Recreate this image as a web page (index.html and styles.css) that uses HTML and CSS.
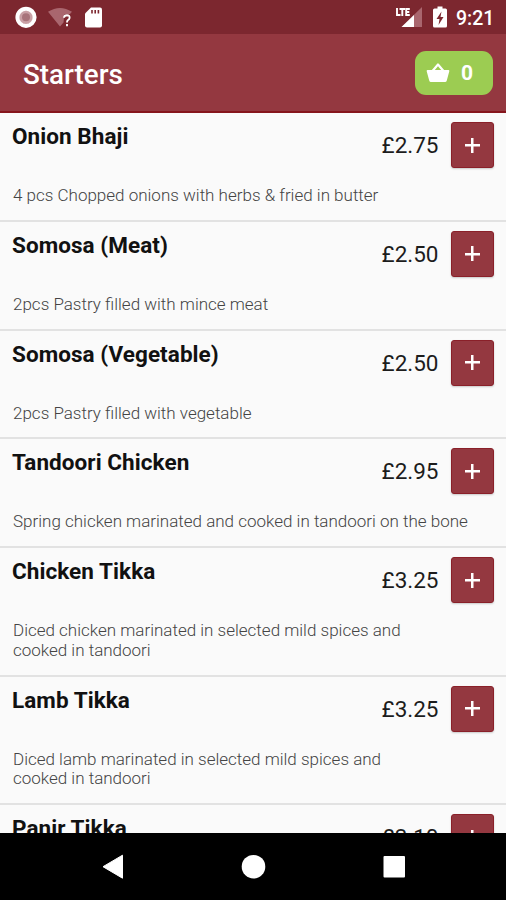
FILE: index.html
```html
<!DOCTYPE html>
<html lang="en">
<head>
<meta charset="utf-8">
<title>Starters</title>
<link rel="stylesheet" href="styles.css">
</head>
<body>
<div class="status">
  <svg class="status-left" width="110" height="34" viewBox="0 0 110 34">
    <circle cx="26" cy="17.3" r="7" fill="#c9a0a5"/>
    <circle cx="26" cy="17.3" r="4" fill="#a8747b"/>
    <circle cx="26" cy="17.3" r="8.600" fill="none" stroke="#fff" stroke-width="4"/>
    <path d="M48 11.8Q60 4.2 72 11.8L70 14H64.5L63.5 22.5L60 26.5Z" fill="#a9666e"/>
    <path d="M64 17.8Q64.2 15.2 67 15.2Q69.8 15.400 69.6 17.800Q69.4 19.200 67.8 20.200Q67 20.900 67 22.500M67 24V26.200" fill="none" stroke="#fff" stroke-width="1.9"/>
    <path d="M91 7.5H100Q102 7.5 102 9.5V25.5Q102 27.5 100 27.5H87Q85 27.5 85 25.5V13.5Z" fill="#fff"/>
    <path d="M92 10V13.5M95.2 10V13.5M98.4 10V13.5" stroke="#7c272f" stroke-width="1.6"/>
  </svg>
  <div class="status-right">
    <svg width="54" height="34" viewBox="0 0 54 34">
      <path d="M27 7V27H6.500Z" fill="#a9666e"/>
      <path d="M0 6H15.500V17H0Z" fill="#7c272f"/>
      <path d="M19 15V27H6.500Z" fill="#fff"/>
      <path d="M2 8V15H5.500M4.500 9H10M7.300 9V16M14.800 9H11.200V15H14.800M11.200 12H14.300" fill="none" stroke="#fff" stroke-width="1.900"/>
      <path d="M42.500 6.500H47.500V8.500H50.500Q52 8.500 52 10V26Q52 27.500 50.500 27.500H39.500Q38 27.500 38 26V10Q38 8.500 39.500 8.500H42.500Z" fill="#fff"/>
      <path d="M46.500 11.500L41.500 19H44.500L43.500 25L48.500 17H45.500Z" fill="#7c272f"/>
    </svg>
    <span class="clock">9:21</span>
  </div>
</div>
<header class="bar">
  <h1>Starters</h1>
  <div class="basket">
    <svg width="24" height="22" viewBox="0 0 24 22">
      <path d="M6.500 9L12 2.500L17.500 9" fill="none" stroke="#fff" stroke-width="2.200" stroke-linejoin="round"/>
      <path d="M1.500 8H22.500Q23.500 8 23.300 9.200L20.800 18.500Q20.400 20 19 20H5Q3.600 20 3.200 18.500L.7 9.200Q.5 8 1.500 8Z" fill="#fff"/>
    </svg>
    <span>0</span>
  </div>
</header>
<main class="list">
  <section class="item"><div class="top"><h2>Onion Bhaji</h2><span class="price">£2.75</span><button class="add"></button></div><p>4 pcs Chopped onions with herbs &amp; fried in butter</p></section>
  <section class="item"><div class="top"><h2>Somosa (Meat)</h2><span class="price">£2.50</span><button class="add"></button></div><p>2pcs Pastry filled with mince meat</p></section>
  <section class="item"><div class="top"><h2>Somosa (Vegetable)</h2><span class="price">£2.50</span><button class="add"></button></div><p>2pcs Pastry filled with vegetable</p></section>
  <section class="item"><div class="top"><h2>Tandoori Chicken</h2><span class="price">£2.95</span><button class="add"></button></div><p>Spring chicken marinated and cooked in tandoori on the bone</p></section>
  <section class="item tall"><div class="top"><h2>Chicken Tikka</h2><span class="price">£3.25</span><button class="add"></button></div><p>Diced chicken marinated in selected mild spices and<br>cooked in tandoori</p></section>
  <section class="item tall"><div class="top"><h2>Lamb Tikka</h2><span class="price">£3.25</span><button class="add"></button></div><p>Diced lamb marinated in selected mild spices and<br>cooked in tandoori</p></section>
  <section class="item"><div class="top"><h2>Panir Tikka</h2><span class="price">£3.10</span><button class="add"></button></div></section>
</main>
<nav class="nav">
  <svg width="506" height="66" viewBox="0 0 506 66">
    <path d="M103 33.700L122.500 22.200V45.200Z" fill="#fff" stroke="#fff" stroke-linejoin="round"/>
    <circle cx="253.500" cy="33.700" r="11.800" fill="#fff"/>
    <rect x="383.500" y="23" width="21.500" height="21.500" rx="1" fill="#fff"/>
  </svg>
</nav>
</body>
</html>
```

FILE: styles.css
```css
* { box-sizing: border-box; }
body {
  margin: 0;
  width: 506px;
  height: 900px;
  overflow: hidden;
  display: flex;
  flex-direction: column;
  background: #fafafa;
  font-family: Roboto, sans-serif;
}
h1, h2, p { margin: 0; }
svg { display: block; }
.status {
  flex: none;
  height: 34px;
  display: flex;
  justify-content: space-between;
  background: #7c272f;
}
.status-right { display: flex; padding-right: 10px; }
.clock {
  width: 40px;
  margin-left: 7px;
  font-size: 19.500px;
  font-weight: 500;
  line-height: 37px;
  color: #fff;
  white-space: nowrap;
}
.bar {
  flex: none;
  height: 79px;
  display: flex;
  align-items: center;
  justify-content: space-between;
  padding: 0 13px 0 23px;
  background: #943840;
  border-bottom: 2px solid #86161d;
  color: #fff;
}
.bar h1 { font-size: 27.800px; font-weight: 500; line-height: 32px; padding-top: 4px; }
.basket {
  width: 78px;
  height: 44px;
  margin-top: 1px;
  border-radius: 11px;
  background: #9ccc52;
  display: flex;
  align-items: center;
  padding-left: 11px;
  gap: 11px;
  font-size: 21px;
  font-weight: 700;
}
.list { flex: 1; min-height: 0; overflow: hidden; }
.item {
  height: 108.75px;
  padding: 9px 12px 0 12px;
  border-bottom: 2px solid #e2e2e2;
}
.item.tall { height: 128.500px; }
.top { display: flex; height: 60px; align-items: flex-start; }
.top h2 { flex: 1; font-size: 22.500px; font-weight: 700; line-height: 28px; letter-spacing: .06px; color: #111; }
.price { font-size: 22.500px; line-height: 46px; color: #1c1c1c; margin-right: 12.500px; }
.add {
  width: 43px;
  height: 46px;
  padding: 0;
  border: 1px solid #8a2029;
  border-radius: 3px;
  background:
    linear-gradient(#fff, #fff) center / 15px 2.500px no-repeat,
    linear-gradient(#fff, #fff) center / 2.500px 15px no-repeat,
    #943840;
  box-shadow: 0 1px 2px rgba(0, 0, 0, .2);
}
.item p {
  padding: 4px 0 0 1px;
  font-size: 17px;
  font-weight: 300;
  line-height: 19.500px;
  color: #444;
  white-space: nowrap;
}
.nav { flex: none; height: 67px; background: #000; }
```
